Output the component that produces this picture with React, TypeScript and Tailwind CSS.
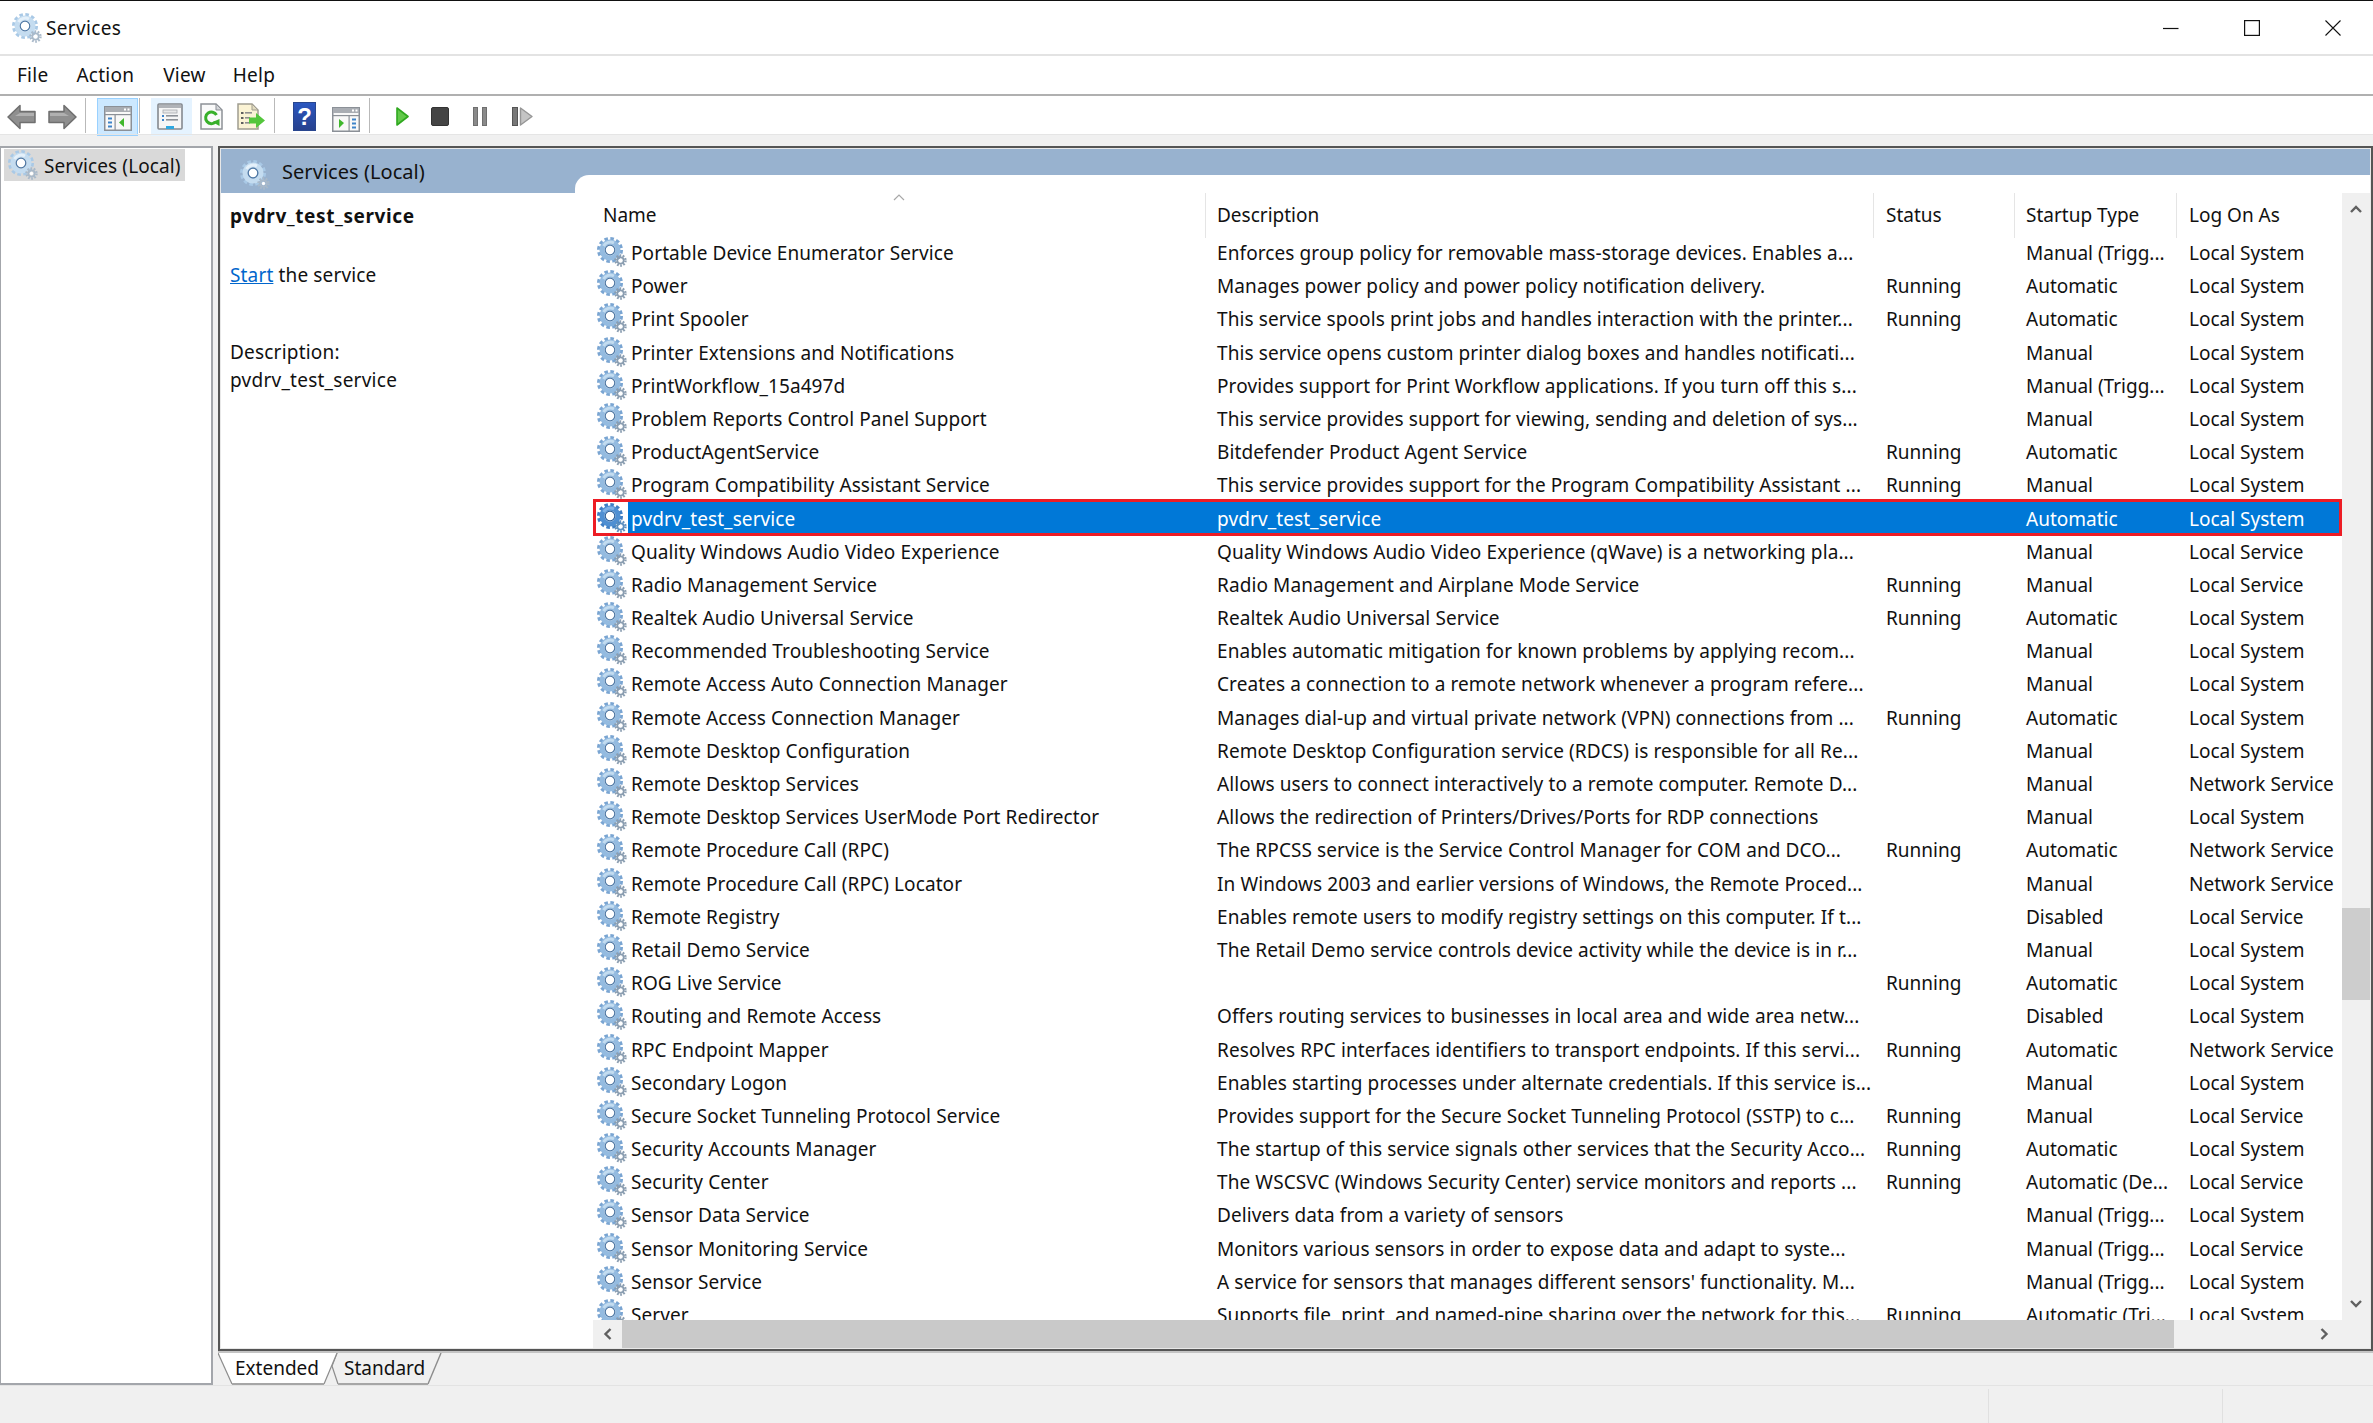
import React from 'react'

type Row = [string, string, string, string, string]

const rows: Row[] = [
  ['Portable Device Enumerator Service', 'Enforces group policy for removable mass-storage devices. Enables a...', '', 'Manual (Trigg...', 'Local System'],
  ['Power', 'Manages power policy and power policy notification delivery.', 'Running', 'Automatic', 'Local System'],
  ['Print Spooler', 'This service spools print jobs and handles interaction with the printer...', 'Running', 'Automatic', 'Local System'],
  ['Printer Extensions and Notifications', 'This service opens custom printer dialog boxes and handles notificati...', '', 'Manual', 'Local System'],
  ['PrintWorkflow_15a497d', 'Provides support for Print Workflow applications. If you turn off this s...', '', 'Manual (Trigg...', 'Local System'],
  ['Problem Reports Control Panel Support', 'This service provides support for viewing, sending and deletion of sys...', '', 'Manual', 'Local System'],
  ['ProductAgentService', 'Bitdefender Product Agent Service', 'Running', 'Automatic', 'Local System'],
  ['Program Compatibility Assistant Service', 'This service provides support for the Program Compatibility Assistant ...', 'Running', 'Manual', 'Local System'],
  ['pvdrv_test_service', 'pvdrv_test_service', '', 'Automatic', 'Local System'],
  ['Quality Windows Audio Video Experience', 'Quality Windows Audio Video Experience (qWave) is a networking pla...', '', 'Manual', 'Local Service'],
  ['Radio Management Service', 'Radio Management and Airplane Mode Service', 'Running', 'Manual', 'Local Service'],
  ['Realtek Audio Universal Service', 'Realtek Audio Universal Service', 'Running', 'Automatic', 'Local System'],
  ['Recommended Troubleshooting Service', 'Enables automatic mitigation for known problems by applying recom...', '', 'Manual', 'Local System'],
  ['Remote Access Auto Connection Manager', 'Creates a connection to a remote network whenever a program refere...', '', 'Manual', 'Local System'],
  ['Remote Access Connection Manager', 'Manages dial-up and virtual private network (VPN) connections from ...', 'Running', 'Automatic', 'Local System'],
  ['Remote Desktop Configuration', 'Remote Desktop Configuration service (RDCS) is responsible for all Re...', '', 'Manual', 'Local System'],
  ['Remote Desktop Services', 'Allows users to connect interactively to a remote computer. Remote D...', '', 'Manual', 'Network Service'],
  ['Remote Desktop Services UserMode Port Redirector', 'Allows the redirection of Printers/Drives/Ports for RDP connections', '', 'Manual', 'Local System'],
  ['Remote Procedure Call (RPC)', 'The RPCSS service is the Service Control Manager for COM and DCO...', 'Running', 'Automatic', 'Network Service'],
  ['Remote Procedure Call (RPC) Locator', 'In Windows 2003 and earlier versions of Windows, the Remote Proced...', '', 'Manual', 'Network Service'],
  ['Remote Registry', 'Enables remote users to modify registry settings on this computer. If t...', '', 'Disabled', 'Local Service'],
  ['Retail Demo Service', 'The Retail Demo service controls device activity while the device is in r...', '', 'Manual', 'Local System'],
  ['ROG Live Service', '', 'Running', 'Automatic', 'Local System'],
  ['Routing and Remote Access', 'Offers routing services to businesses in local area and wide area netw...', '', 'Disabled', 'Local System'],
  ['RPC Endpoint Mapper', 'Resolves RPC interfaces identifiers to transport endpoints. If this servi...', 'Running', 'Automatic', 'Network Service'],
  ['Secondary Logon', 'Enables starting processes under alternate credentials. If this service is...', '', 'Manual', 'Local System'],
  ['Secure Socket Tunneling Protocol Service', 'Provides support for the Secure Socket Tunneling Protocol (SSTP) to c...', 'Running', 'Manual', 'Local Service'],
  ['Security Accounts Manager', 'The startup of this service signals other services that the Security Acco...', 'Running', 'Automatic', 'Local System'],
  ['Security Center', 'The WSCSVC (Windows Security Center) service monitors and reports ...', 'Running', 'Automatic (De...', 'Local Service'],
  ['Sensor Data Service', 'Delivers data from a variety of sensors', '', 'Manual (Trigg...', 'Local System'],
  ['Sensor Monitoring Service', 'Monitors various sensors in order to expose data and adapt to syste...', '', 'Manual (Trigg...', 'Local Service'],
  ['Sensor Service', "A service for sensors that manages different sensors' functionality. M...", '', 'Manual (Trigg...', 'Local System'],
  ['Server', 'Supports file, print, and named-pipe sharing over the network for this...', 'Running', 'Automatic (Tri...', 'Local System'],
]

const columns = 'grid grid-cols-[613px_668px_141px_162px_165px]'

function Gear({ selected = false, pale = false }: { selected?: boolean; pale?: boolean }) {
  const teeth = selected ? '#3f7fc4' : pale ? '#a9c9e6' : '#7aa5d2'
  const ring = selected ? '#4f8fd2' : pale ? '#c4dcf0' : '#94bbe0'
  const light = selected ? '#7fb2e6' : pale ? '#e4f0fa' : '#c3dcf0'
  const small = selected ? '#5c8fbf' : pale ? '#a9b9c9' : '#8a9db0'
  return (
    <svg viewBox="0 0 30 30" className="w-[30px] h-[30px] shrink-0">
      <circle cx="13" cy="13" r="11" fill="none" stroke={teeth} strokeWidth="4" strokeDasharray="3.4 2.36" />
      <circle cx="13" cy="13" r="8" fill="none" stroke={ring} strokeWidth="5" />
      <path d="M6.5 9 A8 8 0 0 1 17 6" fill="none" stroke={light} strokeWidth="3" />
      <circle cx="13" cy="13" r="4.8" fill="#fff" stroke={selected ? '#2a5f9c' : '#4c76a3'} strokeWidth="1.2" />
      <circle cx="23.5" cy="23.5" r="5" fill="none" stroke={small} strokeWidth="2.4" strokeDasharray="1.7 1.44" />
      <circle cx="23.5" cy="23.5" r="3.2" fill="none" stroke={small} strokeWidth="1.8" />
      <circle cx="23.5" cy="23.5" r="1.7" fill="#fff" />
    </svg>
  )
}

function Chevron({ points }: { points: string }) {
  return (
    <svg viewBox="0 0 12 12" className="w-[12px] h-[12px]">
      <polyline points={points} fill="none" stroke="#606060" strokeWidth="2.4" />
    </svg>
  )
}

function Arrow({ flip = false }: { flip?: boolean }) {
  return (
    <svg viewBox="0 0 29 26" className={flip ? 'w-[29px] h-[26px] -scale-x-100' : 'w-[29px] h-[26px]'}>
      <path d="M1 13 L13 1.5 V7.5 H28 V18.5 H13 V24.5 Z" fill="#8f8f8f" stroke="#6f6f6f" strokeWidth="1.5" strokeLinejoin="round" />
      <path d="M13 9 H27 V12 H8 Z" fill="#b0b0b0" />
    </svg>
  )
}

function PanelIcon({ right = false }: { right?: boolean }) {
  return (
    <svg viewBox="0 0 28 25" className="w-[28px] h-[25px]">
      <rect x="0.75" y="0.75" width="26.5" height="23.5" fill="#f8f8f8" stroke="#8b9097" strokeWidth="1.5" />
      <rect x="1" y="1" width="26" height="5" fill="#a9adb3" />
      <rect x="20" y="2.5" width="2" height="2" fill="#fff" />
      <rect x="23.5" y="2.5" width="2" height="2" fill="#fff" />
      <rect x="1" y="8" width="26" height="1.2" fill="#8b9097" />
      {right ? (
        <>
          <path d="M7 12 L12 16 L7 21 Z" fill="#3fb72c" />
          <rect x="16.5" y="9" width="1.2" height="15" fill="#8b9097" />
          <rect x="20" y="11.5" width="4" height="2" fill="#3d83c9" />
          <rect x="20" y="15.5" width="4" height="2" fill="#3d83c9" />
          <rect x="20" y="19.5" width="4" height="2" fill="#3d83c9" />
        </>
      ) : (
        <>
          <rect x="4" y="11.5" width="4" height="2" fill="#3d83c9" />
          <rect x="4" y="15.5" width="4" height="2" fill="#3d83c9" />
          <rect x="4" y="19.5" width="4" height="2" fill="#3d83c9" />
          <rect x="10.5" y="9" width="1.2" height="15" fill="#8b9097" />
          <path d="M20 12 L15 16.5 L20 21 Z" fill="#3fb72c" />
        </>
      )}
    </svg>
  )
}

function PropsIcon() {
  return (
    <svg viewBox="0 0 26 27" className="w-[26px] h-[27px]">
      <rect x="1" y="1" width="24" height="25" rx="1" fill="#f6f6f6" stroke="#85898f" strokeWidth="1.6" />
      <rect x="2" y="2" width="22" height="3" fill="#b0b3b8" />
      <rect x="6" y="7" width="14" height="3" fill="#e8e8e8" stroke="#a8abaf" strokeWidth="0.8" />
      <rect x="5" y="12" width="2" height="2" fill="#3d83c9" />
      <rect x="9" y="12" width="12" height="1.6" fill="#8d9197" />
      <rect x="5" y="16" width="2" height="2" fill="#3d83c9" />
      <rect x="9" y="16" width="12" height="1.6" fill="#8d9197" />
      <rect x="9" y="23" width="8" height="3" fill="#2fa8e0" />
    </svg>
  )
}

function RefreshIcon() {
  return (
    <svg viewBox="0 0 23 27" className="w-[23px] h-[27px]">
      <path d="M1 1 H16 L22 7 V26 H1 Z" fill="#fafafa" stroke="#8d9197" strokeWidth="1.5" />
      <path d="M16 1 V7 H22 Z" fill="#d5d7da" stroke="#8d9197" strokeWidth="1" />
      <path d="M15.5 19 A5.8 5.8 0 1 1 16.5 12" fill="none" stroke="#38b02a" strokeWidth="3" />
      <path d="M12.5 19 L19.5 16 L19.5 23 Z" fill="#38b02a" />
    </svg>
  )
}

function ExportIcon() {
  return (
    <svg viewBox="0 0 28 27" className="w-[28px] h-[27px]">
      <path d="M1 1 H15 L21 7 V26 H1 Z" fill="#fbf3d4" stroke="#a09d90" strokeWidth="1.5" />
      <path d="M15 1 V7 H21 Z" fill="#e2dcc0" stroke="#a09d90" strokeWidth="1" />
      <rect x="4" y="9" width="2.5" height="2" fill="#5f5f5f" />
      <rect x="8" y="9" width="7" height="1.6" fill="#8f8f8f" />
      <rect x="4" y="14" width="2.5" height="2" fill="#5f5f5f" />
      <rect x="8" y="14" width="5" height="1.6" fill="#8f8f8f" />
      <rect x="4" y="19" width="2.5" height="2" fill="#5f5f5f" />
      <rect x="8" y="19" width="5" height="1.6" fill="#8f8f8f" />
      <path d="M12 14.5 H19 V10 L28 17.5 L19 25 V20.5 H12 Z" fill="#54c63c" />
    </svg>
  )
}

function Sep({ className }: { className: string }) {
  return <div className={'w-px h-[35px] -mt-[2px] bg-[#b9b9b9] shrink-0 ' + className} />
}

function Toolbar() {
  return (
    <div className="h-[38px] bg-white flex items-center shrink-0 pt-[3px]">
      <div className="ml-[7px]"><Arrow /></div>
      <div className="ml-[12px]"><Arrow flip /></div>
      <Sep className="ml-[8px]" />
      <div className="ml-[11px] w-[41px] h-[38px] bg-[#cce8ff] border border-[#99d1ff] flex items-center justify-center pt-[4px]">
        <PanelIcon />
      </div>
      <Sep className="ml-[1px]" />
      <div className="ml-[11px] w-[41px] h-[38px] bg-[#e5f3ff] flex items-center justify-center pr-[3px]">
        <PropsIcon />
      </div>
      <div className="ml-[8px]"><RefreshIcon /></div>
      <div className="ml-[14px]"><ExportIcon /></div>
      <Sep className="ml-[9px]" />
      <div className="ml-[18px] w-[23px] h-[29px] bg-gradient-to-b from-[#2b57c0] to-[#27418e] border border-[#28468f] flex items-center justify-center text-white text-[24px] font-bold leading-none font-['Liberation_Sans',sans-serif]">
        ?
      </div>
      <div className="ml-[16px] pt-[5px]"><PanelIcon right /></div>
      <Sep className="ml-[9px]" />
      <svg viewBox="0 0 13 19" className="ml-[26px] w-[13px] h-[19px] -mt-[1px]">
        <path d="M1 1 L12 9.5 L1 18 Z" fill="#62c94a" stroke="#2fa81f" strokeWidth="1.6" strokeLinejoin="round" />
      </svg>
      <div className="ml-[22px] w-[18px] h-[19px] -mt-[1px] rounded-[2px] bg-[#444444] border border-[#333333]" />
      <div className="ml-[24px] flex gap-[4px] -mt-[1px]">
        <div className="w-[5px] h-[19px] bg-[#8a8a8a] border border-[#6f6f6f]" />
        <div className="w-[5px] h-[19px] bg-[#8a8a8a] border border-[#6f6f6f]" />
      </div>
      <svg viewBox="0 0 21 19" className="ml-[25px] w-[21px] h-[19px] -mt-[1px]">
        <rect x="0.5" y="0.5" width="5" height="18" fill="#777777" stroke="#555555" />
        <path d="M8.5 1 L20 9.5 L8.5 18 Z" fill="#c4c4c4" stroke="#969696" strokeWidth="1.4" strokeLinejoin="round" />
      </svg>
    </div>
  )
}

function ServiceRow({ row, index }: { row: Row; index: number }) {
  const selected = index === 8
  const text = selected ? 'text-white bg-[#0078d7]' : ''
  return (
    <div className={columns + ' h-[33.2px] relative leading-[35px]'}>
      <div className="flex overflow-hidden">
        <div className="w-[35px] pl-[4px] pt-[1px] shrink-0">
          <Gear selected={selected} />
        </div>
        <div className={'flex-1 pl-[3px] tracking-[0.1px] whitespace-nowrap overflow-hidden ' + text}>{row[0]}</div>
      </div>
      <div className={'pl-[11px] tracking-[0.1px] whitespace-nowrap overflow-hidden ' + text}>{row[1]}</div>
      <div className={'pl-[12px] whitespace-nowrap overflow-hidden ' + text}>{row[2]}</div>
      <div className={'pl-[11px] whitespace-nowrap overflow-hidden ' + text}>{row[3]}</div>
      <div className={'pl-[12px] whitespace-nowrap overflow-hidden ' + text}>{row[4]}</div>
      {selected && <div className="absolute -top-[2.5px] -bottom-[1.5px] left-0 right-0 border-[3px] border-[#ed1c24] pointer-events-none" />}
    </div>
  )
}

function HeaderCell({ label, pad, last = false }: { label: string; pad: string; last?: boolean }) {
  return (
    <div className={pad + ' whitespace-nowrap leading-[45px]' + (last ? '' : ' border-r border-[#e5e5e5]')}>{label}</div>
  )
}

export default function App() {
  return (
    <div className="w-[2373px] h-[1423px] overflow-hidden flex flex-col bg-[#f0f0f0] text-[#111111] text-[19px] font-['Noto_Sans','Open_Sans',sans-serif]">
      {/* title bar */}
      <div className="h-[56px] shrink-0 bg-white border-t border-[#111111] border-b-2 border-b-[#e3e3e3] flex items-center">
        <div className="ml-[12px]"><Gear pale /></div>
        <span className="ml-[4px] tracking-[0.35px] mt-[1px]">Services</span>
        <div className="ml-auto flex items-center">
          <svg viewBox="0 0 16 16" className="w-[16px] h-[16px]"><path d="M0 8.5 H15.5" stroke="#111" strokeWidth="1.2" /></svg>
          <svg viewBox="0 0 16 16" className="ml-[65px] w-[16px] h-[16px]"><rect x="0.6" y="0.6" width="14.8" height="14.8" fill="none" stroke="#111" strokeWidth="1.2" /></svg>
          <svg viewBox="0 0 16 16" className="ml-[65px] mr-[32px] w-[16px] h-[16px]"><path d="M0.5 0.5 L15.5 15.5 M15.5 0.5 L0.5 15.5" stroke="#111" strokeWidth="1.1" /></svg>
        </div>
      </div>

      {/* menu */}
      <div className="h-[40px] shrink-0 bg-white border-b-2 border-[#b0b0b0] flex items-center pl-[17px] tracking-[0.25px]">
        <span>File</span>
        <span className="ml-[28px]">Action</span>
        <span className="ml-[29px]">View</span>
        <span className="ml-[27px]">Help</span>
      </div>

      <Toolbar />
      <div className="h-[12px] shrink-0 border-t border-[#e5e5e5]" />

      {/* main area */}
      <div className="flex-1 min-h-0 flex">
        <div className="w-[213px] shrink-0 bg-white border-t-2 border-r-2 border-b-2 border-l border-[#a3a6ab] pl-[3px] pt-px">
          <div className="w-[181px] h-[32px] bg-[#d9d9d9] flex items-center">
            <div className="ml-[4px]"><Gear pale /></div>
            <span className="ml-[6px] mt-[2px] whitespace-nowrap tracking-[0.1px]">Services (Local)</span>
          </div>
        </div>

        <div className="flex-1 min-w-0 ml-[5px] flex flex-col">
          <div className="flex-1 min-h-0 border-2 border-[#555555] p-px bg-[#e8e8e8] flex flex-col">
            {/* blue header with notch */}
            <div className="h-[44px] shrink-0 bg-[#98b2cf] relative">
              <div className="absolute left-[19px] top-[11px]"><Gear pale /></div>
              <span className="absolute left-[61px] top-[9px] text-[20px] leading-[28px] whitespace-nowrap tracking-[0.05px]">Services (Local)</span>
              <div className="ml-[354px] pt-[26px] h-full">
                <div className="h-[18px] bg-white rounded-tl-[14px]" />
              </div>
            </div>

            {/* body */}
            <div className="flex-1 min-h-0 flex bg-white">
              <div className="w-[372px] shrink-0 pl-[9px] leading-[28px] pt-[9px]">
                <div className="font-bold tracking-[0.6px]">pvdrv_test_service</div>
                <div className="mt-[31px] tracking-[0.15px]">
                  <span className="text-[#0066cc] underline">Start</span> the service
                </div>
                <div className="mt-[49px] tracking-[0.2px]">Description:</div>
                <div className="tracking-[0.25px]">pvdrv_test_service</div>
              </div>

              <div className="flex-1 min-w-0 flex flex-col">
                <div className="flex-1 min-h-0 flex">
                  <div className="w-[1749px] shrink-0 flex flex-col">
                    <div className={columns + ' h-[43px] shrink-0 relative'}>
                      <HeaderCell label="Name" pad="pl-[10px]" />
                      <HeaderCell label="Description" pad="pl-[11px]" />
                      <HeaderCell label="Status" pad="pl-[12px]" />
                      <HeaderCell label="Startup Type" pad="pl-[11px]" />
                      <HeaderCell label="Log On As" pad="pl-[12px]" last />
                      <svg viewBox="0 0 12 7" className="absolute left-[300px] top-[1px] w-[12px] h-[7px]">
                        <polyline points="1,6 6,1 11,6" fill="none" stroke="#a8a8a8" strokeWidth="1.2" />
                      </svg>
                    </div>
                    <div className="flex-1 min-h-0 overflow-hidden">
                      {rows.map((row, i) => (
                        <ServiceRow key={row[0]} row={row} index={i} />
                      ))}
                    </div>
                  </div>
                  {/* vertical scrollbar */}
                  <div className="flex-1 bg-[#f0f0f0] flex flex-col">
                    <div className="h-[32px] flex items-center justify-center"><Chevron points="1,9 6,4 11,9" /></div>
                    <div className="h-[683px]" />
                    <div className="h-[92px] bg-[#cdcdcd]" />
                    <div className="flex-1" />
                    <div className="h-[32px] flex items-center justify-center"><Chevron points="1,3 6,8 11,3" /></div>
                  </div>
                </div>
                {/* horizontal scrollbar */}
                <div className="h-[28px] shrink-0 bg-[#f0f0f0] flex items-center">
                  <div className="w-[29px] flex justify-center"><Chevron points="8.5,1 3.5,6 8.5,11" /></div>
                  <div className="w-[1552px] h-full bg-[#c9c9c9]" />
                  <div className="ml-[144px]"><Chevron points="3.5,1 8.5,6 3.5,11" /></div>
                </div>
              </div>
            </div>
          </div>

          {/* tabs */}
          <div className="h-[34px] shrink-0 border-t-2 border-[#c4c4c4] relative flex items-center leading-none">
            <svg viewBox="0 0 226 32" className="absolute left-0 top-0 w-[226px] h-[32px]">
              <path d="M119 0 L114 13 L120 31 H210 L223 0 Z" fill="#f0f0f0" />
              <path d="M119 0 L114 13 L120 31" fill="none" stroke="#8c8c8c" strokeWidth="1.2" />
              <path d="M223 0 L210 31" fill="none" stroke="#8c8c8c" strokeWidth="1.4" />
              <path d="M120 31 H210" fill="none" stroke="#a6a6a6" strokeWidth="2" />
              <path d="M0 0 L14 31 H106 L119 0 Z" fill="#ffffff" />
              <path d="M0 0 L14 31" fill="none" stroke="#8c8c8c" strokeWidth="1.2" />
              <path d="M119 0 L106 31" fill="none" stroke="#8c8c8c" strokeWidth="1.2" />
              <path d="M14 31 H106" fill="none" stroke="#a6a6a6" strokeWidth="2" />
            </svg>
            <span className="relative ml-[17px] -mt-[1px]">Extended</span>
            <span className="relative ml-[25px] -mt-[1px]">Standard</span>
          </div>
        </div>
      </div>

      {/* status bar */}
      <div className="h-[38px] shrink-0 border-t border-[#e3e3e3] pt-[3px] flex">
        <div className="w-[1988px]" />
        <div className="w-[234px] border-l border-[#e0e0e0]" />
        <div className="flex-1 border-l border-[#e0e0e0]" />
      </div>
    </div>
  )
}
